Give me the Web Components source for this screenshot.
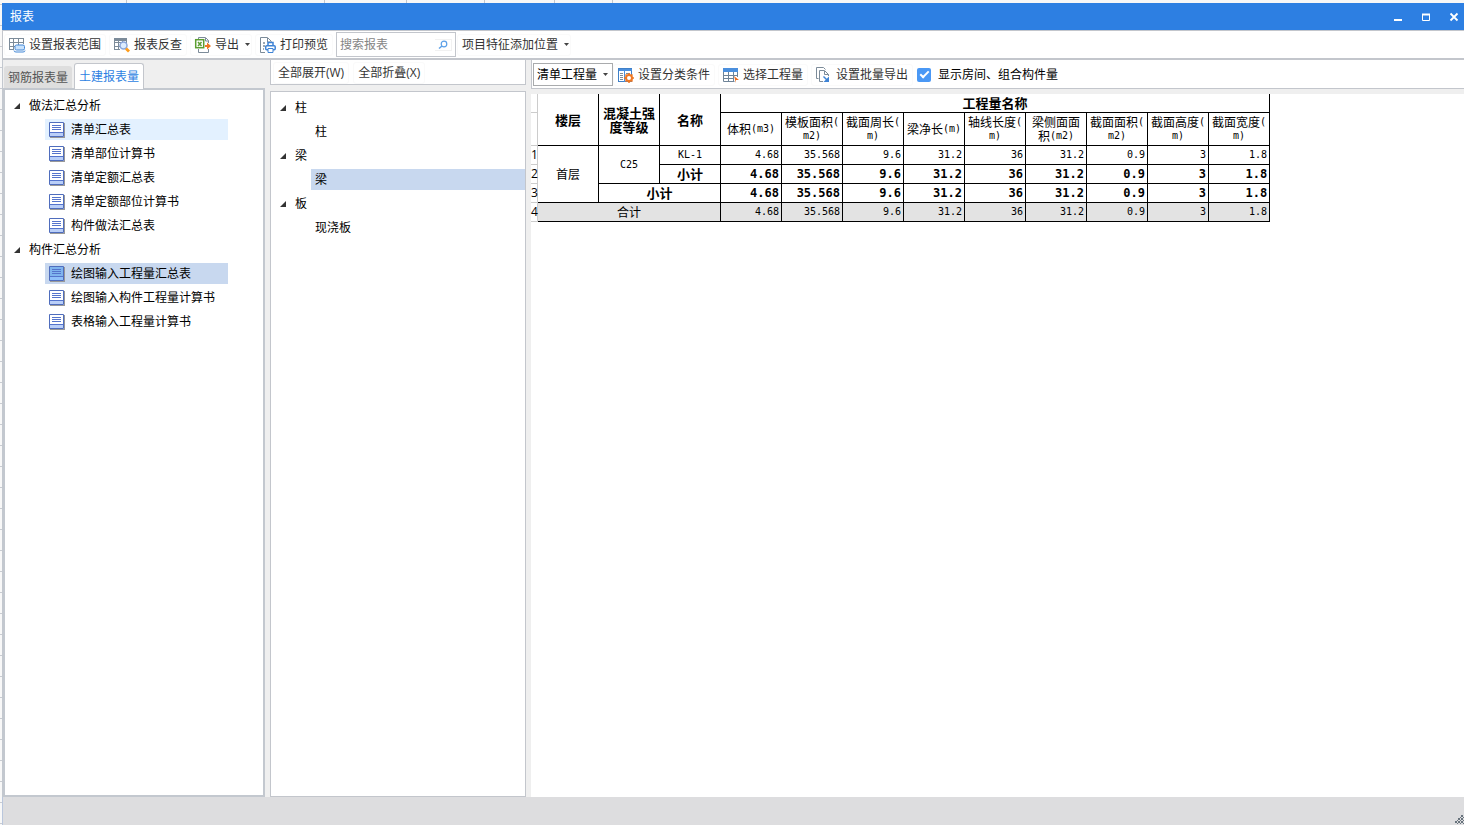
<!DOCTYPE html>
<html lang="zh-CN">
<head>
<meta charset="utf-8">
<title>报表</title>
<style>
html,body{margin:0;height:100%}
body{font:12px/16px "Open Sans","Noto Sans CJK SC",sans-serif;color:#000;background:#f5f5f5}
</style>
</head>
<body>
<report-window></report-window>
<script>
const ICONS = {
  range: '<path d="M0 1.500h15M.5 1v12M4.500 1v12M9.500 1v7M14.500 1v6M0 5.500h15M0 9.500h6M0 12.500h5" stroke="#7c8b99" fill="none"/><rect x="6" y="8" width="9.500" height="5" rx="1.500" fill="#c9e2fc" stroke="#4387d6"/><path d="M5 13.500q0 1.500 2 1.500h7q2 0 2-1.500" fill="none" stroke="#4387d6"/>',
  review: '<path d="M0 1h13v3H0z" fill="#7c8b99"/><path d="M.5 2v11M4.500 2v11M8.500 2v3M12.500 2v4M0 5.500h13M0 9.500h6M0 12.500h6" stroke="#7c8b99" fill="none"/><circle cx="9.500" cy="8.500" r="3.500" fill="#dcecff" stroke="#8aa7dc" stroke-width="1.500"/><path d="M11 12.500l2-2 3 3-2 2z" fill="#ff9c1a"/>',
  export: '<path d="M3.500 2V.5h7l3 3V6M3.500 12v3.500h10V12M10.500 1v3h3" fill="none" stroke="#7c8b99"/><rect x=".7" y="2.700" width="8" height="8" fill="#fff" stroke="#5c9e31" stroke-width="1.500"/><path d="M3 5l3.500 4m0-4L3 9" stroke="#5c9e31" stroke-width="1.500"/><path d="M10 8h2V5.500L16 9l-4 3.500V10h-2z" fill="#ef7722"/>',
  print: '<path d="M5 15.500H.5V.5h7l4 4M7.500 1v4h4" fill="none" stroke="#7c8b99"/><path d="M3 6h2M3 9h2M3 12h1" stroke="#7c8b99" stroke-width="1.500"/><path d="M8 9V5.500h5V9" fill="#fff" stroke="#3e83d5" stroke-width="1.500"/><rect x="5.700" y="8.700" width="9.500" height="4" rx="1" fill="#fff" stroke="#3e83d5" stroke-width="1.500"/><path d="M8 11.500h5v4H8z" fill="#fff" stroke="#3e83d5"/>',
  classify: '<rect x=".5" y="1.500" width="13" height="13" fill="#fff" stroke="#3f80c8"/><path d="M1 2h13v2H1zM6 3h1v12H6z" fill="#4b8fdd"/><path d="M2 6.500h3M2 8.500h3M2 10.500h3M2 12.500h3M8 6.500h4" stroke="#7c8b99"/><circle cx="11" cy="11" r="3" fill="#fff" stroke="#ef7722" stroke-width="2"/><path d="M11 6v2m0 6v2M6 11h2m6 0h2M7.500 7.500L9 9m4 4l1.500 1.500m-7 0L9 13m4-4l1.500-1.500" stroke="#ef7722" stroke-width="1.500"/>',
  choose: '<rect x="0" y="1" width="15" height="4" fill="#4b8fdd"/><path d="M.5 5v9.500h11M5.500 5v9.500M10.500 5v9M14.500 5v5M0 8.500h15M0 11.500h11" fill="none" stroke="#6f8498"/><path d="M11 9l5 4h-3v3z" fill="#ef6c1d"/>',
  batch: '<path d="M2.500 11.500H.5V.5h7l2 2M3.500 14.500v-11h5l4 4V9M3.500 14.500H7M8.500 4v3.500h4" fill="none" stroke="#7c8b99"/><path d="M7.500 9.500l4 4" stroke="#3e83d5" stroke-width="1.500"/><path d="M13 9.500V15H7.500z" fill="#3e83d5"/>',
  report: '<path d="M1 15h15V1h-1v14z" fill="#888"/><path d="M15 1h1v15H1v-1h14z" fill="#999"/><path d="M.5.5h14v14H.5z" fill="var(--paper,#fff)" stroke="#4f6dbd"/><path d="M1 11h13v3H1z" fill="var(--foot,#bacff8)"/><path d="M1 10.500h13M3 3.500h9M3 5.500h9M3 7.500h9" stroke="#5574cc"/>',
  min: '<path d="M4 11h8" stroke="#fff" stroke-width="2"/>',
  max: '<path d="M4.500 5v6.500h7V5" fill="none" stroke="#fff"/><path d="M4 5.500h8" stroke="#fff" stroke-width="2"/>',
  close: '<path d="M4.500 4.500l7 7m0-7l-7 7" stroke="#fff" stroke-width="1.800"/>',
  search: '<circle cx="9" cy="7" r="2.800" fill="none" stroke="#5ba0e8" stroke-width="1.200"/><path d="M7 9l-3 2.500" stroke="#5ba0e8" stroke-width="1.500"/>',
  grip: '<path d="M13 6h2v2h-2zM10 9h2v2h-2zM13 9h2v2h-2zM7 12h2v2H7zM10 12h2v2h-2zM13 12h2v2h-2zM12 8h1v1h-1zM9 11h1v1H9zM12 11h1v1h-1zM9 14h1v1H9zM12 14h1v1h-1zM15 8h1v1h-1zM15 11h1v1h-1zM15 14h1v1h-1z" fill="#68737d"/>'
};

function define(name, html, setup) {
  const template = document.createElement('template');
  template.innerHTML = html;
  customElements.define(name, class extends HTMLElement {
    connectedCallback() {
      if (this.shadowRoot) return;
      this.attachShadow({mode: 'open'}).append(template.content.cloneNode(true));
      if (setup) setup(this, this.shadowRoot);
    }
  });
}

define('ui-icon', `<style>:host{display:block;width:16px;height:16px;flex:none}svg{display:block;overflow:visible}</style><svg width="16" height="16" viewBox="0 0 16 16" aria-hidden="true"></svg>`,
  (el, root) => { root.querySelector('svg').innerHTML = ICONS[el.getAttribute('name')]; });

define('drop-arrow', `<style>:host{display:block;width:5px;height:3px;flex:none}svg{display:block}</style><svg width="5" height="3" aria-hidden="true"><path d="M0 0h5L2.500 3z" fill="#444"/></svg>`);

define('tool-button', `<style>
:host{display:block;flex:none}
button{display:flex;align-items:center;gap:4px;height:22px;margin:0;padding:0 4px;border:1px solid #fafafa;border-radius:3px;background:none;font:inherit;color:#333;white-space:nowrap}
:host([menu]) button{padding-right:1px}
button:hover{background:#e5f1ff}
drop-arrow{margin-left:2px}
</style><button type="button"><slot></slot></button>`, (el, root) => {
  const b = root.querySelector('button');
  if (el.hasAttribute('icon')) { const i = document.createElement('ui-icon'); i.setAttribute('name', el.getAttribute('icon')); b.prepend(i); }
  if (el.hasAttribute('menu')) b.append(document.createElement('drop-arrow'));
});

define('title-bar', `<style>
:host{display:flex;align-items:center;justify-content:space-between;height:27px;padding-left:8px;background:#2d7fe2;color:#fff}
h1{margin:0;font:inherit}
div{display:flex;gap:12px;padding-right:2px}
button{padding:0;border:0;background:none}
</style><h1><slot></slot></h1><div><button aria-label="最小化"><ui-icon name="min"></ui-icon></button><button aria-label="最大化"><ui-icon name="max"></ui-icon></button><button aria-label="关闭"><ui-icon name="close"></ui-icon></button></div>`);

define('search-box', `<style>
:host{display:flex;align-items:center;box-sizing:border-box;width:120px;height:25px;padding:0 3px;border:1px solid #c3c6cc;background:#fff}
input{flex:1;min-width:0;padding:0;border:0;outline:0;font:inherit;background:none}
input::placeholder{color:#858585;opacity:1}
button{padding:0;height:12px;border:1px solid #f1f1f1;border-width:1px 1px 1px 0;background:none;display:flex;align-items:center}
</style><input type="text" placeholder="搜索报表" aria-label="搜索报表"><button aria-label="搜索"><ui-icon name="search"></ui-icon></button>`);

define('mode-select', `<style>
:host{display:grid;grid-template-columns:1fr 12px;align-items:center;width:78px;height:21px;border:1px solid #a9abad;background:#fff}
select{grid-area:1/1/2/3;width:100%;height:21px;padding:0 0 0 3px;border:0;appearance:none;background:none;font:inherit;color:#000}
drop-arrow{grid-area:1/2/2/3;pointer-events:none;margin-left:3px}
</style><select aria-label="工程量类型"><option>清单工程量</option></select><drop-arrow></drop-arrow>`);

define('check-option', `<style>
:host{display:block}
label{display:flex;align-items:center;gap:7px}
input{appearance:none;width:14px;height:14px;margin:0;border-radius:2px;display:grid;place-items:center}
input:checked{background:#4a98f5}
input:checked::before{content:"";width:7px;height:3px;border:solid #fff;border-width:0 0 2px 2px;transform:rotate(-45deg);margin-top:-3px}
</style><label><input type="checkbox" checked><slot></slot></label>`);

define('tree-group', `<style>
:host{display:block}
button{display:flex;align-items:center;gap:8px;height:24px;padding:0 0 0 9px;border:0;background:none;font:inherit;color:#000}
svg{display:block}
</style><button type="button" aria-expanded="true"><svg width="7" height="6" aria-hidden="true"><path d="M0 6L6 0v6z" fill="#333"/></svg><span></span></button><div role="group"><slot></slot></div>`,
  (el, root) => {
    root.querySelector('span').textContent = el.getAttribute('label');
    root.querySelector('button').addEventListener('click', e => {
      const g = root.querySelector('div'); g.hidden = !g.hidden;
      e.currentTarget.setAttribute('aria-expanded', String(!g.hidden));
    });
  });

define('tree-item', `<style>
:host{display:flex;box-sizing:border-box;height:24px;padding:1px 0 2px 40px}
button{display:flex;align-items:center;gap:6px;flex:1;height:21px;padding:0 4px;border:0;background:none;font:inherit;color:#000;text-align:left;white-space:nowrap}
:host([hot]) button{background:#e3f1ff}
:host([selected]) button{background:#c8d8ef;--paper:#7fb4ee;--foot:#8fc0fa}
</style><button type="button"><slot></slot></button>`, (el, root) => {
  if (el.hasAttribute('icon')) { const i = document.createElement('ui-icon'); i.setAttribute('name', 'report'); root.querySelector('button').prepend(i); }
});

define('report-nav', `<style>
:host{display:flex;flex-direction:column;width:262px;flex:none}
nav{display:flex;align-items:flex-end;height:28px;position:relative;padding-left:1px;box-sizing:border-box}
nav button{box-sizing:border-box;height:22px;padding:1px 4px 0;border:0;border-radius:3px 3px 0 0;background:#dedede;color:#555;font:inherit}
nav button[aria-selected=true]{height:26px;margin:0 0 -1px 2px;background:#fff;border:1px solid #c3c6cc;border-bottom:0;color:#2d7fe2}
section{flex:1;border:2px solid #c3c8cf;background:#fff;padding:4px 0}
tree-group{width:223px}
</style><nav role="tablist"><button role="tab" aria-selected="false">钢筋报表量</button><button role="tab" aria-selected="true">土建报表量</button></nav>
<section>
<tree-group label="做法汇总分析"><tree-item icon hot>清单汇总表</tree-item><tree-item icon>清单部位计算书</tree-item><tree-item icon>清单定额汇总表</tree-item><tree-item icon>清单定额部位计算书</tree-item><tree-item icon>构件做法汇总表</tree-item></tree-group>
<tree-group label="构件汇总分析"><tree-item icon selected>绘图输入工程量汇总表</tree-item><tree-item icon>绘图输入构件工程量计算书</tree-item><tree-item icon>表格输入工程量计算书</tree-item></tree-group>
</section>`);

define('component-nav', `<style>
:host{display:flex;flex-direction:column;gap:6px;width:256px;flex:none}
header{display:flex;gap:4px;align-items:center;box-sizing:border-box;height:25px;padding:1px 0 0 2px;border:1px solid #c3c6cc;border-top:0;background:#fff}
section{flex:1;border:1px solid #c3c6cc;background:#fff;padding:4px 0}
</style><header><tool-button>全部展开(W)</tool-button><tool-button>全部折叠(X)</tool-button></header>
<section><tree-group label="柱"><tree-item>柱</tree-item></tree-group><tree-group label="梁"><tree-item selected>梁</tree-item></tree-group><tree-group label="板"><tree-item>现浇板</tree-item></tree-group></section>`);

define('quantity-table', `<style>
:host{display:block}
table{width:739px;table-layout:fixed;border-collapse:separate;border-spacing:0}
col{width:61px}
col.n{width:7px}
tr{height:19px}
tr.names{height:33px}
th,td{box-sizing:border-box;padding:0 2px;border:solid #000;border-width:0 1px 1px 0;font:10px/14px "DejaVu Sans Mono","Noto Sans CJK SC",monospace;text-align:center}
.zh{font-size:12px;font-family:"Noto Sans CJK SC",sans-serif}
.names th{padding:0 1px;font:12px/14px "Noto Sans CJK SC",sans-serif}
.names div{display:flex;justify-content:center;align-items:center;height:14px;white-space:nowrap}
.names span{font:10px/14px "DejaVu Sans Mono",monospace}
.top th,.b{font:bold 13px/14px "Noto Sans CJK SC",sans-serif}
td.v{text-align:right}
.sub td.v{font:bold 12px/14px "DejaVu Sans Mono",monospace}
.total td{background:#e3e3e3}
tr th.n{padding:0;border-color:#ccc;font:12px/16px "Open Sans",sans-serif;text-align:left;white-space:nowrap}
</style><table aria-label="工程量汇总"><colgroup><col class="n"><col><col><col><col><col><col><col><col><col><col><col><col></colgroup>
<thead><tr class="top"><th class="n"></th><th rowspan="2">楼层</th><th rowspan="2">混凝土强度等级</th><th rowspan="2">名称</th><th colspan="9">工程量名称</th></tr><tr class="names"><th class="n"></th></tr></thead><tbody></tbody></table>`,
  (el, root) => {
    const names = root.querySelector('.names');
    const labels = ['体积~(m3)', '模板面积~(|~m2)', '截面周长~(|~m)', '梁净长~(m)', '轴线长度~(|~m)', '梁侧面面|积~(m2)', '截面面积~(|~m2)', '截面高度~(|~m)', '截面宽度~(|~m)'];
    for (const label of labels) {
      const th = document.createElement('th');
      th.innerHTML = label.split('|').map(line => {
        const [text, unit] = line.split('~');
        return '<div>' + text + (unit ? '<span>' + unit + '</span>' : '') + '</div>';
      }).join('');
      names.append(th);
    }
    const values = ['4.68','35.568','9.6','31.2','36','31.2','0.9','3','1.8'].map(v => '<td class="v">' + v + '</td>').join('');
    root.querySelector('tbody').innerHTML = [
      ['', '<td class="zh" rowspan="3">首层</td><td rowspan="2">C25</td><td>KL-1</td>'],
      ['sub', '<td class="b">小计</td>'],
      ['sub', '<td class="b" colspan="2">小计</td>'],
      ['total', '<td class="zh" colspan="3">合计</td>']
    ].map(([cls, lead], i) => '<tr class="' + cls + '"><th class="n">' + (i + 1) + '</th>' + lead + values + '</tr>').join('');
  });

define('report-view', `<style>
:host{display:flex;flex-direction:column;gap:5px;flex:1;min-width:0}
header{display:flex;align-items:center;box-sizing:border-box;height:29px;padding:1px 0 0 1px;border:solid #c3c6cc;border-width:0 0 1px 1px;background:#fff}
tool-button + tool-button{margin-left:3px}
check-option{margin-left:4px}
main{flex:1;background:#fff}
</style><header><mode-select></mode-select><tool-button icon="classify">设置分类条件</tool-button><tool-button icon="choose">选择工程量</tool-button><tool-button icon="batch">设置批量导出</tool-button><check-option>显示房间、组合构件量</check-option></header><main><quantity-table></quantity-table></main>`);

define('backdrop-strip', `<style>
:host{display:block;height:3px;background:#f7f7f7}
div{display:grid;grid-template-columns:127px 198px 82px 78px 70px 58px;height:3px}
i{border-right:1px solid #c3c6cc}
</style><div><i></i><i></i><i></i><i></i><i></i><i></i></div>`);

define('report-window', `<style>
:host{display:flex;flex-direction:column;height:100vh;background:repeating-linear-gradient(#f8f8f8 0 4px,#c9ccd2 4px 5px,#f8f8f8 5px 21px)}
.window{flex:1;display:flex;flex-direction:column;min-height:0;margin-left:2px;background:#efefef}
.tools{display:flex;align-items:center;height:27px;padding-left:1px;border:solid #c3c6cc;border-width:1px 0 2px 1px;background:#fff}
.tools tool-button + tool-button{margin-left:3px}
.tools search-box{margin:0 1px 0 3px}
.body{flex:1;display:flex;gap:5px;min-height:0;border-left:1px solid #c3c8cf}
footer{height:28px;background:#dddddf;border-left:1px solid #b9c6dc;display:flex;justify-content:flex-end;align-items:flex-end}
</style><backdrop-strip></backdrop-strip>
<div class="window"><title-bar>报表</title-bar>
<div class="tools"><tool-button icon="range">设置报表范围</tool-button><tool-button icon="review">报表反查</tool-button><tool-button icon="export" menu>导出</tool-button><tool-button icon="print">打印预览</tool-button><search-box></search-box><tool-button menu>项目特征添加位置</tool-button></div>
<div class="body"><report-nav></report-nav><component-nav></component-nav><report-view></report-view></div>
<footer><ui-icon name="grip"></ui-icon></footer></div>`);
</script>
</body>
</html>
